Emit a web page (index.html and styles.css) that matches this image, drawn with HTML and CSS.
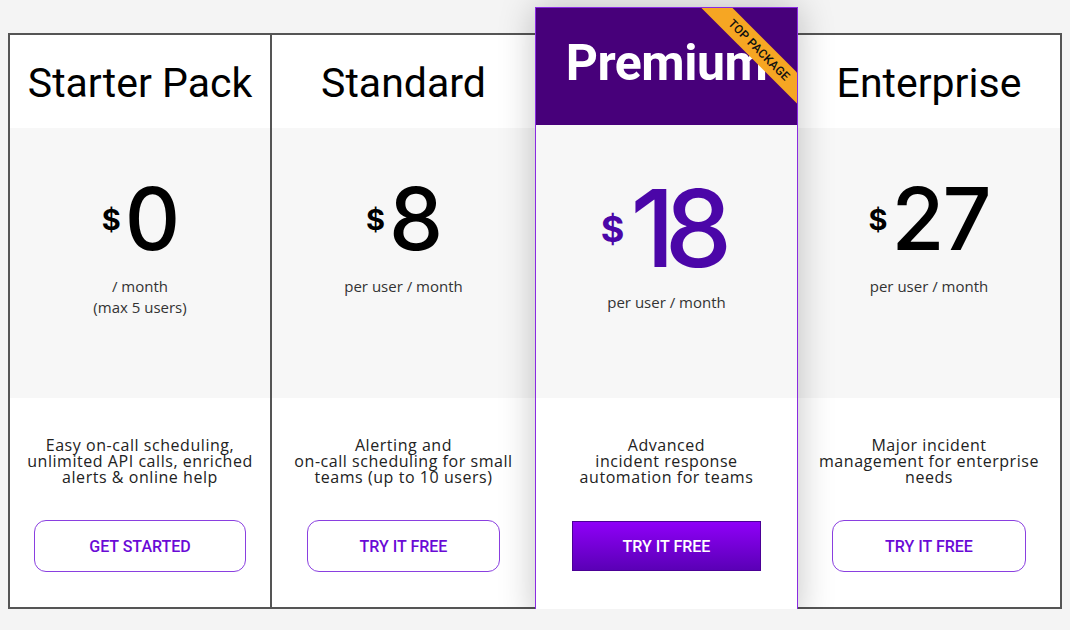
FILE: index.html
```html
<!DOCTYPE html>
<html lang="en">
<head>
<meta charset="utf-8">
<title>Pricing</title>
<link rel="stylesheet" href="styles.css">
</head>
<body>
<div class="plans">
  <div class="plan plan-first">
    <div class="plan-head"><h2 class="plan-title">Starter Pack</h2></div>
    <div class="plan-price">
      <div class="price"><span class="cur">$</span><span class="amount">0</span></div>
      <p class="per">/ month<br>(max 5 users)</p>
    </div>
    <div class="plan-body">
      <p class="desc">Easy on-call scheduling,<br>unlimited API calls, enriched<br>alerts &amp; online help</p>
      <a class="btn btn-wide">GET STARTED</a>
    </div>
  </div>
  <div class="plan">
    <div class="plan-head"><h2 class="plan-title">Standard</h2></div>
    <div class="plan-price">
      <div class="price"><span class="cur">$</span><span class="amount">8</span></div>
      <p class="per">per user / month</p>
    </div>
    <div class="plan-body">
      <p class="desc">Alerting and<br>on-call scheduling for small<br>teams (up to 10 users)</p>
      <a class="btn">TRY IT FREE</a>
    </div>
  </div>
  <div class="plan plan-featured">
    <div class="plan-head featured-head">
      <h2 class="plan-title featured-title">Premium</h2>
      <div class="ribbon">TOP PACKAGE</div>
    </div>
    <div class="plan-price featured-price">
      <div class="price"><span class="cur cur-big">$</span><span class="amount amount-big">18</span></div>
      <p class="per per-featured">per user / month</p>
    </div>
    <div class="plan-body">
      <p class="desc">Advanced<br>incident response<br>automation for teams</p>
      <a class="btn btn-solid">TRY IT FREE</a>
    </div>
  </div>
  <div class="plan">
    <div class="plan-head"><h2 class="plan-title">Enterprise</h2></div>
    <div class="plan-price">
      <div class="price"><span class="cur">$</span><span class="amount">27</span></div>
      <p class="per">per user / month</p>
    </div>
    <div class="plan-body">
      <p class="desc">Major incident<br>management for enterprise<br>needs</p>
      <a class="btn">TRY IT FREE</a>
    </div>
  </div>
</div>
</body>
</html>
```
FILE: styles.css
```css
* { box-sizing: border-box; }
html, body { margin: 0; padding: 0; }
body {
  background: #f4f4f4;
  font-family: "Open Sans", "Liberation Sans", sans-serif;
  color: #222;
}
.plans {
  margin: 33px 0 0 8px;
  width: 1054px;
  height: 576px;
  border: 2px solid #555;
  display: grid;
  grid-template-columns: 262px 263px 263px 262px;
  grid-template-rows: 572px;
  background: #fff;
}
.plan {
  display: flex;
  flex-direction: column;
  min-width: 0;
}
.plan-first { border-right: 2px solid #555; }
.plan-head {
  height: 93px;
  background: #fff;
  display: flex;
  align-items: center;
  justify-content: center;
}
.plan-title {
  margin: 0;
  font-family: Roboto, "Liberation Sans", sans-serif;
  font-weight: 400;
  font-size: 41px;
  color: #000;
  padding-top: 2px;
}
.plan-price {
  height: 270px;
  background: #f7f7f7;
  padding-top: 48px;
  text-align: center;
}
.price {
  display: flex;
  justify-content: center;
  align-items: flex-start;
}
.cur {
  font-family: Inter, "Liberation Sans", sans-serif;
  font-weight: 700;
  font-size: 29px;
  line-height: 29px;
  margin-top: 29px;
  margin-right: 4px;
  color: #000;
}
.amount {
  font-family: Inter, "Liberation Sans", sans-serif;
  font-weight: 500;
  font-size: 86px;
  line-height: 86px;
  color: #000;
  letter-spacing: -2px;
}
.per {
  margin: 14px 0 0;
  font-size: 15px;
  line-height: 21px;
  color: #333;
}
.plan-body {
  flex: 1;
  background: #fff;
  padding-top: 39px;
  display: flex;
  flex-direction: column;
  align-items: center;
}
.desc {
  margin: 0;
  font-size: 16px;
  line-height: 16px;
  letter-spacing: 0.55px;
  color: #222;
  text-align: center;
  white-space: nowrap;
}
.btn {
  margin-top: 35px;
  height: 52px;
  padding: 0 52px;
  border: 1px solid #8a3fe0;
  border-radius: 12px;
  display: flex;
  align-items: center;
  justify-content: center;
  font-family: Roboto, "Liberation Sans", sans-serif;
  font-weight: 500;
  font-size: 16px;
  color: #6a0ad6;
  background: #fff;
  text-decoration: none;
}
.btn-wide { padding: 0 54px; }
.btn-solid {
  margin-top: 36px;
  height: 50px;
  padding: 0 50px;
  border-radius: 0;
  border: 1px solid #4b0096;
  background: linear-gradient(#8f00f8, #5a00b6);
  color: #fff;
}

/* featured card */
.plan-featured {
  align-self: start;
  height: 614px;
  margin-top: -28px;
  border: 1px solid #8a2be2;
  background: #fff;
  position: relative;
  z-index: 1;
  box-shadow: 0 0 34px rgba(0, 0, 0, 0.24);
}
.featured-head {
  height: 117px;
  flex: none;
  background: #47007a;
  position: relative;
  overflow: hidden;
  padding-bottom: 10px;
}
.featured-title {
  font-weight: 700;
  font-size: 50px;
  color: #fff;
  letter-spacing: -0.5px;
}
.ribbon {
  position: absolute;
  left: 143px;
  top: 31px;
  width: 160px;
  height: 22px;
  background: #f6a623;
  color: #111;
  font-family: Roboto, "Liberation Sans", sans-serif;
  font-weight: 500;
  font-size: 12px;
  line-height: 22px;
  letter-spacing: 0.2px;
  text-align: center;
  transform: rotate(45deg);
}
.featured-price {
  height: 273px;
  flex: none;
  padding-top: 50px;
}
.cur-big {
  font-size: 36px;
  line-height: 36px;
  margin-top: 36px;
  margin-right: 6px;
  color: #4b06a8;
}
.amount-big {
  font-size: 107px;
  line-height: 107px;
  color: #4b06a8;
  letter-spacing: -10px;
  margin-right: 10px;
}
.per-featured { margin-top: 10px; }
```
